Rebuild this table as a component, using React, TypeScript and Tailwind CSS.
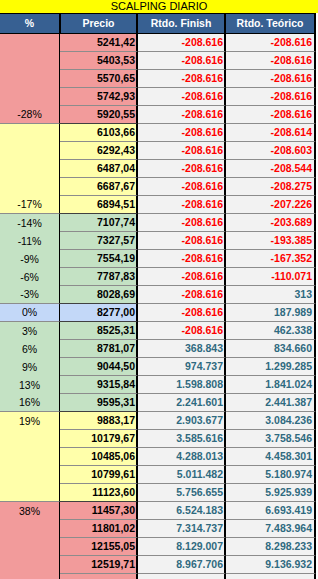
type Zone = "red" | "yellow" | "green" | "blue";

type Row = {
  pct: string;
  precio: string;
  finish: string;
  teorico: string;
  zone: Zone;
};

const rows: Row[] = [
  { pct: "", precio: "5241,42", finish: "-208.616", teorico: "-208.616", zone: "red" },
  { pct: "", precio: "5403,53", finish: "-208.616", teorico: "-208.616", zone: "red" },
  { pct: "", precio: "5570,65", finish: "-208.616", teorico: "-208.616", zone: "red" },
  { pct: "", precio: "5742,93", finish: "-208.616", teorico: "-208.616", zone: "red" },
  { pct: "-28%", precio: "5920,55", finish: "-208.616", teorico: "-208.616", zone: "red" },
  { pct: "", precio: "6103,66", finish: "-208.616", teorico: "-208.614", zone: "yellow" },
  { pct: "", precio: "6292,43", finish: "-208.616", teorico: "-208.603", zone: "yellow" },
  { pct: "", precio: "6487,04", finish: "-208.616", teorico: "-208.544", zone: "yellow" },
  { pct: "", precio: "6687,67", finish: "-208.616", teorico: "-208.275", zone: "yellow" },
  { pct: "-17%", precio: "6894,51", finish: "-208.616", teorico: "-207.226", zone: "yellow" },
  { pct: "-14%", precio: "7107,74", finish: "-208.616", teorico: "-203.689", zone: "green" },
  { pct: "-11%", precio: "7327,57", finish: "-208.616", teorico: "-193.385", zone: "green" },
  { pct: "-9%", precio: "7554,19", finish: "-208.616", teorico: "-167.352", zone: "green" },
  { pct: "-6%", precio: "7787,83", finish: "-208.616", teorico: "-110.071", zone: "green" },
  { pct: "-3%", precio: "8028,69", finish: "-208.616", teorico: "313", zone: "green" },
  { pct: "0%", precio: "8277,00", finish: "-208.616", teorico: "187.989", zone: "blue" },
  { pct: "3%", precio: "8525,31", finish: "-208.616", teorico: "462.338", zone: "green" },
  { pct: "6%", precio: "8781,07", finish: "368.843", teorico: "834.660", zone: "green" },
  { pct: "9%", precio: "9044,50", finish: "974.737", teorico: "1.299.285", zone: "green" },
  { pct: "13%", precio: "9315,84", finish: "1.598.808", teorico: "1.841.024", zone: "green" },
  { pct: "16%", precio: "9595,31", finish: "2.241.601", teorico: "2.441.387", zone: "green" },
  { pct: "19%", precio: "9883,17", finish: "2.903.677", teorico: "3.084.236", zone: "yellow" },
  { pct: "", precio: "10179,67", finish: "3.585.616", teorico: "3.758.546", zone: "yellow" },
  { pct: "", precio: "10485,06", finish: "4.288.013", teorico: "4.458.301", zone: "yellow" },
  { pct: "", precio: "10799,61", finish: "5.011.482", teorico: "5.180.974", zone: "yellow" },
  { pct: "", precio: "11123,60", finish: "5.756.655", teorico: "5.925.939", zone: "yellow" },
  { pct: "38%", precio: "11457,30", finish: "6.524.183", teorico: "6.693.419", zone: "red" },
  { pct: "", precio: "11801,02", finish: "7.314.737", teorico: "7.483.964", zone: "red" },
  { pct: "", precio: "12155,05", finish: "8.129.007", teorico: "8.298.233", zone: "red" },
  { pct: "", precio: "12519,71", finish: "8.967.706", teorico: "9.136.932", zone: "red" },
];

const fill: Record<Zone, string> = {
  red: "bg-[#F29B9B]",
  yellow: "bg-[#FFFFAA]",
  green: "bg-[#C4E2C4]",
  blue: "bg-[#C3D8F8]",
};

function valueColor(v: string) {
  return v.startsWith("-") ? "text-[#FF0000]" : "text-[#2F6A80]";
}

function DataRow({ row, next }: { row: Row; next?: Row }) {
  const boundary = next !== undefined && next.zone !== row.zone;
  const lineL = boundary ? "border-b border-b-[#404040]" : "border-b border-b-[#8C8C8C]";
  return (
    <div className="flex h-[18px]">
      <div
        className={`w-[60px] shrink-0 border-r border-r-black flex items-center justify-center text-black ${fill[row.zone]} ${
          boundary ? "border-b border-b-[#8C8C8C]" : ""
        }`}
      >
        {row.pct}
      </div>
      <div
        className={`w-[78px] shrink-0 border-r-2 border-r-black flex items-center justify-end pr-[1px] font-bold text-black ${fill[row.zone]} ${lineL}`}
      >
        {row.precio}
      </div>
      <div
        className={`w-[88px] shrink-0 border-r-2 border-r-black border-b border-b-[#8C8C8C] bg-[#F2F2F2] flex items-center justify-end pr-[1px] font-bold ${valueColor(
          row.finish
        )}`}
      >
        {row.finish}
      </div>
      <div
        className={`w-[90px] shrink-0 border-r-2 border-r-black border-b border-b-[#8C8C8C] bg-[#F2F2F2] flex items-center justify-end pr-[2px] font-bold ${valueColor(
          row.teorico
        )}`}
      >
        {row.teorico}
      </div>
    </div>
  );
}

export default function App() {
  return (
    <div className="w-[318px] h-[579px] overflow-hidden bg-white font-['Liberation_Sans',Arial,sans-serif] text-[10.5px] leading-none">
      <div className="h-[13px] bg-[#FFFF00] flex items-center justify-center text-[11px] text-black">
        SCALPING DIARIO
      </div>

      <div className="w-[316px] h-[21px] flex border-t border-b border-black bg-[#376092] text-white font-bold text-[10.5px]">
        <div className="w-[61px] shrink-0 border-r-2 border-r-black flex items-center justify-center">%</div>
        <div className="w-[77px] shrink-0 border-r-2 border-r-black flex items-center justify-center">Precio</div>
        <div className="w-[88px] shrink-0 border-r-2 border-r-black flex items-center justify-center">Rtdo. Finish</div>
        <div className="w-[90px] shrink-0 border-r-2 border-r-black flex items-center justify-center">Rtdo. Teórico</div>
      </div>

      <div className="w-[316px]">
        {rows.map((r, i) => (
          <DataRow key={r.precio} row={r} next={rows[i + 1]} />
        ))}
        <div className="flex h-[18px]">
          <div className={`w-[60px] shrink-0 border-r border-r-black ${fill.red}`} />
          <div className={`w-[78px] shrink-0 border-r-2 border-r-black ${fill.red}`} />
          <div className="w-[88px] shrink-0 border-r-2 border-r-black bg-[#F2F2F2]" />
          <div className="w-[90px] shrink-0 border-r-2 border-r-black bg-[#F2F2F2]" />
        </div>
      </div>
    </div>
  );
}
